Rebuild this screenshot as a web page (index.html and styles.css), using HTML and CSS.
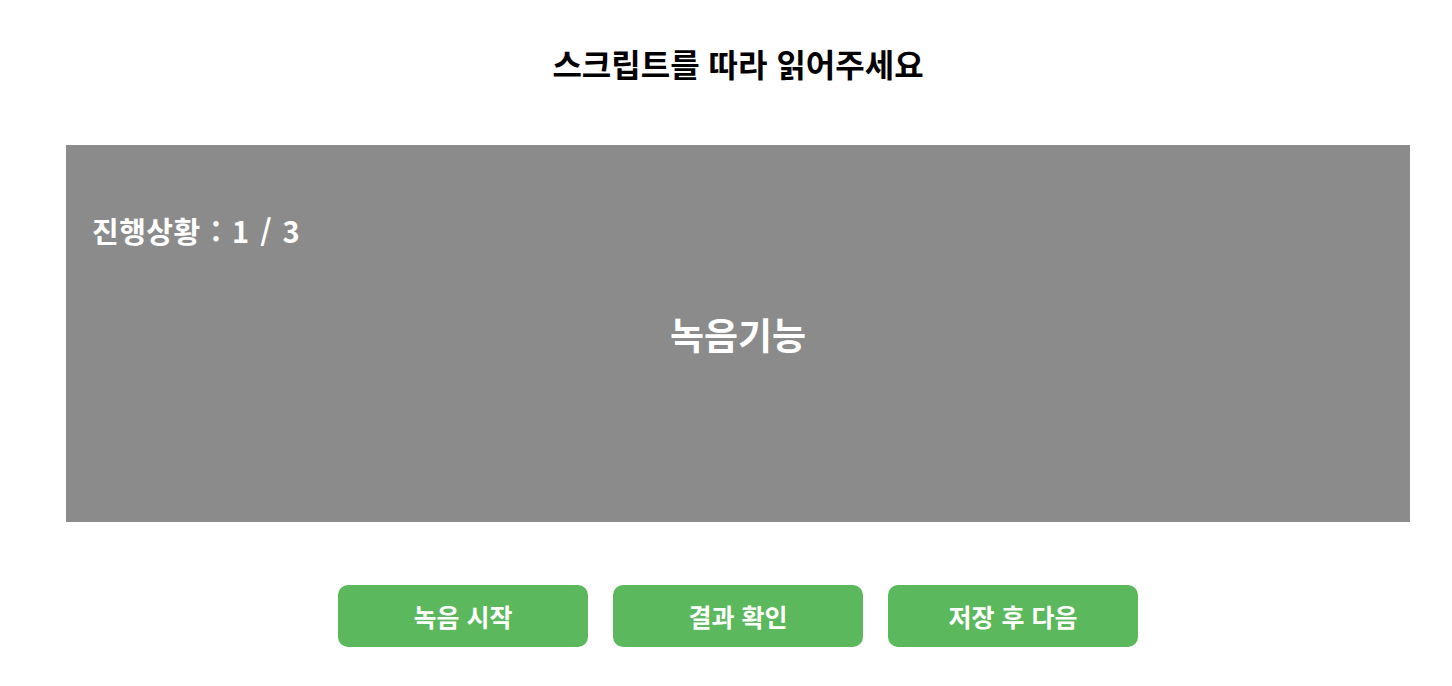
FILE: index.html
```html
<!DOCTYPE html>
<html lang="ko">
<head>
    <meta charset="UTF-8">
    <meta name="viewport" content="width=device-width, initial-scale=1.0">
    <title>스크립트 녹음</title>
    <link rel="stylesheet" href="styles.css">
</head>
<body>
    <div class="page">
        <h2 class="title">스크립트를 따라 읽어주세요</h2>

        <div class="record-box">
            <div class="progress">진행상황 : 1 / 3</div>
            <div class="script-text">녹음기능</div>
        </div>

        <div class="buttons">
            <button>녹음 시작</button>
            <button>결과 확인</button>
            <button>저장 후 다음</button>
        </div>
    </div>
</body>
</html>
```

FILE: styles.css
```css
body {
    font-family: "Noto Sans CJK KR", "Noto Sans", sans-serif;
    background-color: #fff;
    color: #000;
    margin: 0;
}
.page {
    padding: 0 42px 0 66px;
    display: flex;
    flex-direction: column;
}
.title {
    text-align: center;
    font-size: 32px;
    font-weight: bold;
    margin: 0;
    height: 145px;
    line-height: 126px;
}
.record-box {
    background-color: #8b8b8b;
    color: #fff;
    height: 377px;
    display: grid;
    grid-template-rows: 1fr auto 1fr;
    padding: 0 26px;
}
.progress {
    align-self: center;
    font-size: 29px;
    font-weight: bold;
    word-spacing: 2px;
    letter-spacing: 0.5px;
    margin-top: 8px;
}
.script-text {
    grid-row: 2;
    text-align: center;
    font-size: 37px;
    font-weight: bold;
}
.buttons {
    display: flex;
    justify-content: center;
    gap: 25px;
    margin-top: 63px;
}
button {
    width: 250px;
    height: 62px;
    font-family: inherit;
    font-size: 25px;
    font-weight: bold;
    background-color: #5cb85c;
    color: #fff;
    border: none;
    border-radius: 10px;
    cursor: pointer;
}
```
